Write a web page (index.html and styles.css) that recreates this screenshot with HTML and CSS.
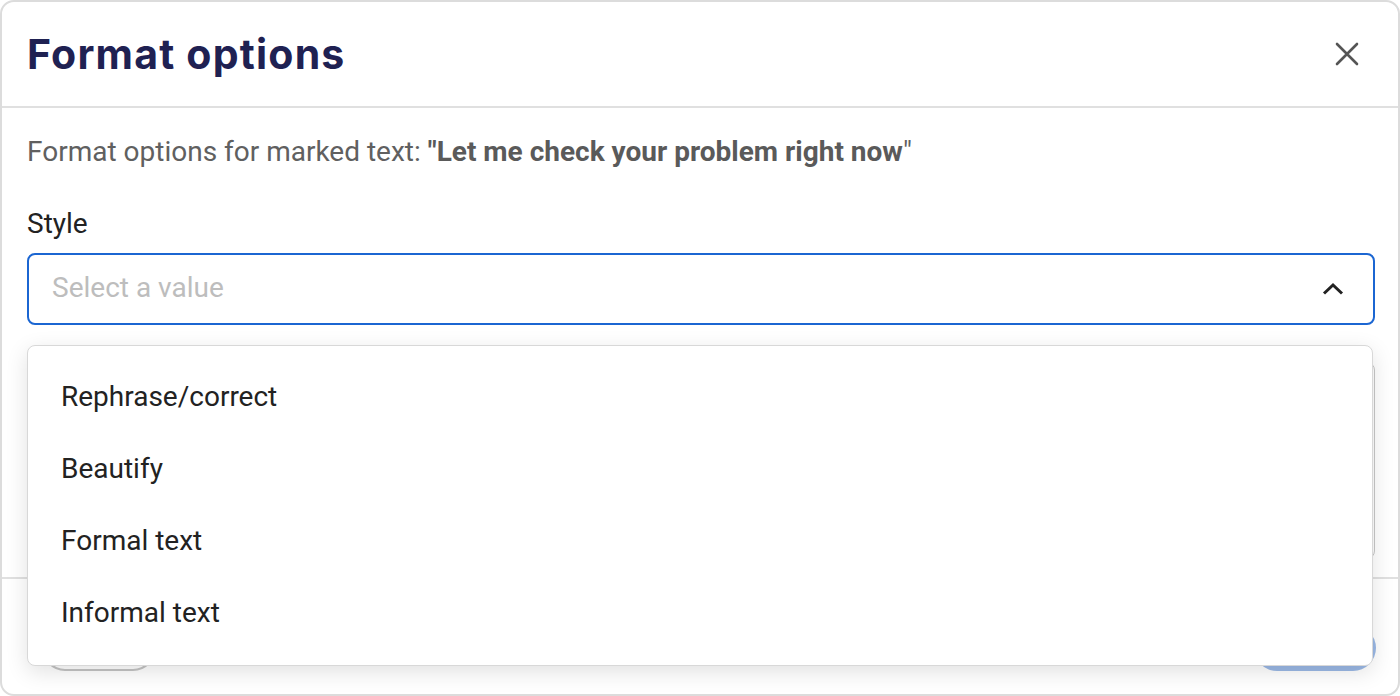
FILE: index.html
```html
<!DOCTYPE html>
<html>
<head>
<meta charset="utf-8">
<link rel="stylesheet" href="styles.css">
</head>
<body>
<div class="modal">
  <div class="modal-header">
    <h1 class="title">Format options</h1>
    <button class="close" aria-label="Close">
      <svg width="24" height="24" viewBox="0 0 24 24"><path d="M2 2 L22 22 M22 2 L2 22" stroke="#555" stroke-width="2.6" stroke-linecap="round" fill="none"/></svg>
    </button>
  </div>
  <div class="modal-body">
    <p class="intro">Format options for marked text: <b>"Let me check your problem right now</b>"</p>
    <label class="field-label">Style</label>
    <div class="select">
      <span class="placeholder">Select a value</span>
      <svg class="chevron" width="22" height="14" viewBox="0 0 22 14"><path d="M2 11.5 L11 3 L20 11.5" stroke="#222" stroke-width="3" fill="none" stroke-linejoin="miter"/></svg>
    </div>
    <div class="textarea"></div>
  </div>
  <div class="modal-footer">
    <button class="btn btn-cancel">Cancel</button>
    <button class="btn btn-apply">Apply</button>
  </div>
  <ul class="dropdown">
    <li>Rephrase/correct</li>
    <li>Beautify</li>
    <li>Formal text</li>
    <li>Informal text</li>
  </ul>
</div>
</body>
</html>
```
FILE: styles.css
```css
html, body {
  margin: 0;
  padding: 0;
  background: #fff;
}
body {
  font-family: Roboto, "Liberation Sans", sans-serif;
}
.modal {
  position: relative;
  box-sizing: border-box;
  width: 1400px;
  height: 696px;
  border: 2px solid #dcdcdc;
  border-radius: 14px;
  overflow: hidden;
  display: flex;
  flex-direction: column;
  background: #fff;
}
.modal-header {
  box-sizing: border-box;
  height: 106px;
  border-bottom: 2px solid #e0e0e0;
  display: flex;
  align-items: center;
  justify-content: space-between;
  padding: 0 39px 0 25px;
}
.title {
  margin: 0;
  font-family: Inter, "Open Sans", sans-serif;
  font-weight: 700;
  font-size: 41px;
  color: #1f2152;
  letter-spacing: 1.2px;
}
.close {
  border: 0;
  background: none;
  padding: 0;
  width: 24px;
  height: 24px;
  display: flex;
  cursor: pointer;
}
.modal-body {
  padding: 26px 23px 0 25px;
  display: flex;
  flex-direction: column;
  flex: 1;
}
.intro {
  margin: 0;
  font-size: 28px;
  line-height: 36px;
  color: #606060;
}
.intro b {
  font-weight: 700;
  color: #5a5a5a;
}
.field-label {
  margin-top: 36px;
  font-size: 28px;
  line-height: 36px;
  color: #222;
}
.select {
  margin-top: 11px;
  box-sizing: border-box;
  height: 72px;
  border: 2px solid #1b66d2;
  border-radius: 8px;
  display: flex;
  align-items: center;
  justify-content: space-between;
  padding: 0 29px 3px 23px;
}
.chevron {
  margin-top: 3px;
}
.placeholder {
  font-size: 28px;
  color: #bdbdbd;
}
.textarea {
  margin-top: 37px;
  height: 195px;
  border: 1px solid #c8c8c8;
  border-radius: 8px;
}
.modal-footer {
  box-sizing: border-box;
  height: 117px;
  border-top: 2px solid #e0e0e0;
  display: flex;
  justify-content: space-between;
  align-items: flex-start;
  padding: 46px 22px 0 40px;
}
.btn {
  height: 46px;
  border-radius: 23px;
  font-family: Roboto, sans-serif;
  font-size: 22px;
  padding: 0 24px;
}
.btn-cancel {
  width: 114px;
  background: #fff;
  border: 2px solid #c4c4c4;
  color: #333;
}
.btn-apply {
  width: 122px;
  background: #9bb9e6;
  border: 0;
  color: #fff;
}
.dropdown {
  position: absolute;
  left: 25px;
  top: 343px;
  width: 1346px;
  height: 321px;
  box-sizing: border-box;
  margin: 0;
  padding: 14px 0 0 0;
  list-style: none;
  background: #fff;
  border: 1px solid #d8d8d8;
  border-radius: 8px;
  box-shadow: 0 6px 22px rgba(0, 0, 0, 0.12);
}
.dropdown li {
  height: 72px;
  display: flex;
  align-items: center;
  padding-left: 33px;
  font-size: 28px;
  color: #222;
}
```
